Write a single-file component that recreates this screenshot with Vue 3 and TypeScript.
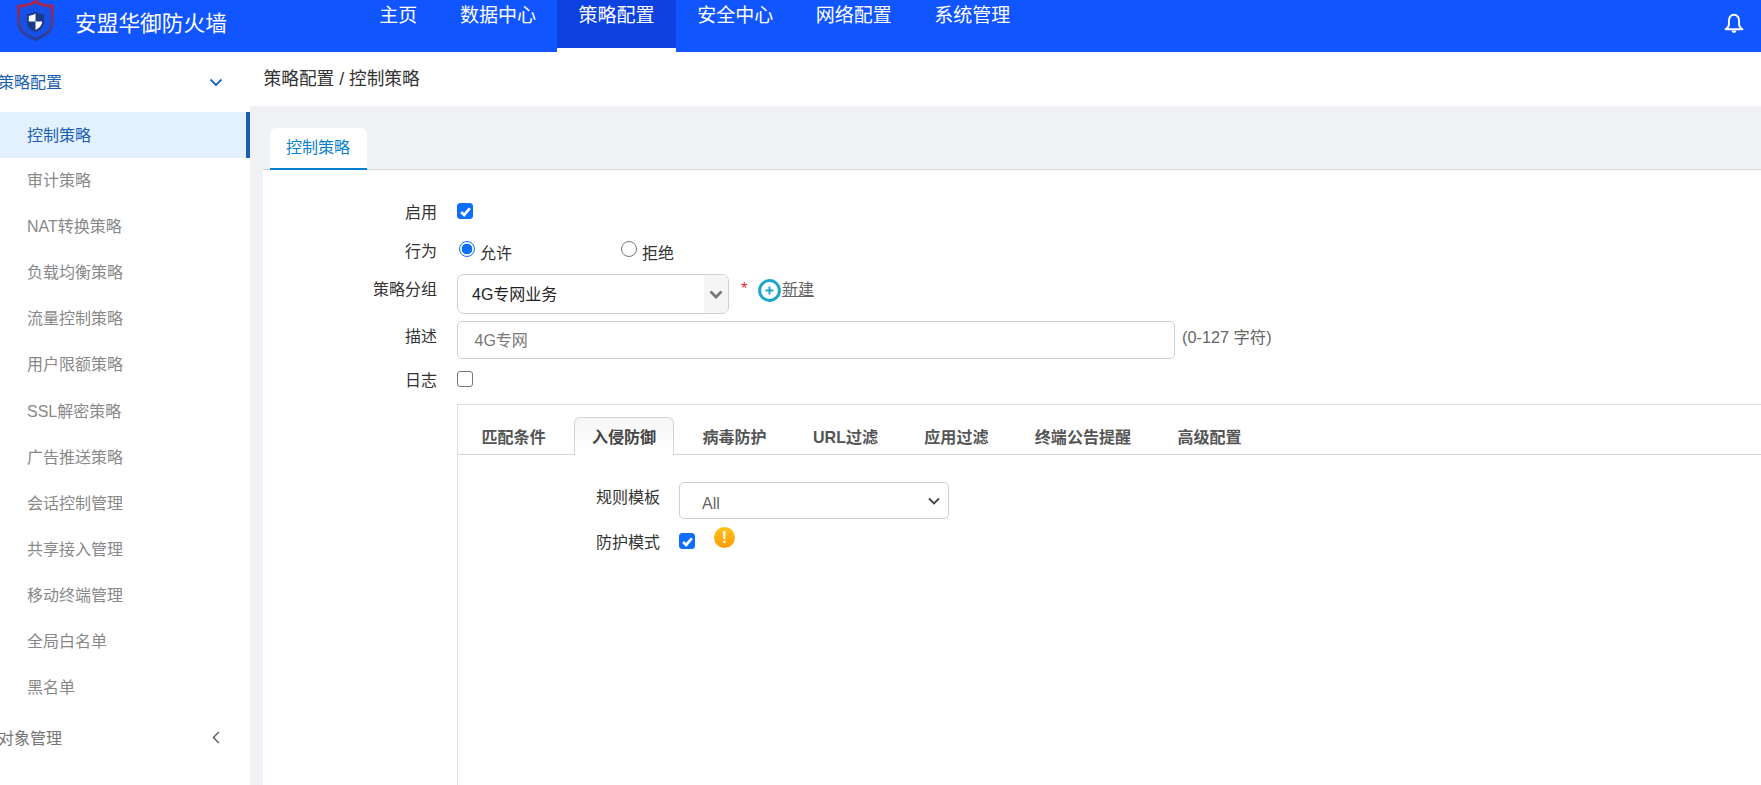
<script setup lang="ts">
const navItems = ['主页', '数据中心', '策略配置', '安全中心', '网络配置', '系统管理']
const sideItems = ['控制策略', '审计策略', 'NAT转换策略', '负载均衡策略', '流量控制策略', '用户限额策略', 'SSL解密策略', '广告推送策略', '会话控制管理', '共享接入管理', '移动终端管理', '全局白名单', '黑名单']
const innerTabs = ['匹配条件', '入侵防御', '病毒防护', 'URL过滤', '应用过滤', '终端公告提醒', '高级配置']
</script>

<template>
  <div class="page">
    <header class="topbar">
      <div class="brand">
        <svg class="logo" width="37" height="41" viewBox="0 0 37 41">
          <defs>
            <linearGradient id="shieldG" x1="0" y1="0" x2="0" y2="1">
              <stop offset="0" stop-color="#b8213f" />
              <stop offset="0.5" stop-color="#5c3a86" />
              <stop offset="1" stop-color="#22409a" />
            </linearGradient>
          </defs>
          <path d="M18.5 1.4C14 4.7 7 6 1.6 6.2V22C1.6 30 9 36 18.5 39.3C28 36 35.4 30 35.4 22V6.2C30 6 23 4.7 18.5 1.4Z" fill="#1650e6" stroke="url(#shieldG)" stroke-width="3" />
          <path d="M18.5 11.5C15.5 13.4 12.6 14.1 10 14.3V22.5C10 27 14 30.4 18.5 32C23 30.4 27 27 27 22.5V14.3C24.4 14.1 21.5 13.4 18.5 11.5Z" fill="#1d3a86" />
          <path d="M18.5 13.6V21.6H11.8V15.9C14.2 15.7 16.3 15 18.5 13.6Z M18.5 21.6H25.2C25 25.6 21.9 28.6 18.5 30Z" fill="#fff" />
        </svg>
        <span class="brand-name">安盟华御防火墙</span>
      </div>
      <nav class="nav">
        <a v-for="n in navItems" :key="n" class="nav-item" :class="{ active: n === '策略配置' }">{{ n }}</a>
      </nav>
      <svg class="bell" width="20" height="21" viewBox="0 0 20 21" fill="none">
        <path d="M10 1.8C6.6 1.8 4.9 4.6 4.9 8V11.5C4.9 13.6 3.4 15 1.6 16.2H18.4C16.6 15 15.1 13.6 15.1 11.5V8C15.1 4.6 13.4 1.8 10 1.8Z" stroke="#fff" stroke-width="1.9" stroke-linejoin="round" />
        <path d="M7.6 17.6H12.4C12.2 19.2 11.3 20 10 20S7.8 19.2 7.6 17.6Z" fill="#fff" />
      </svg>
    </header>

    <div class="body">
      <aside class="sidebar">
        <div class="group open">
          <span class="group-name">策略配置</span>
          <svg width="14" height="9" viewBox="0 0 14 9" fill="none"><path d="M1.5 1.5L7 7L12.5 1.5" stroke="#2767c6" stroke-width="2" /></svg>
        </div>
        <a v-for="s in sideItems" :key="s" class="side-item" :class="{ active: s === '控制策略' }">{{ s }}</a>
        <div class="group closed">
          <span class="group-name">对象管理</span>
          <svg width="8" height="13" viewBox="0 0 8 13" fill="none"><path d="M6.8 1L1.5 6.5L6.8 12" stroke="#666" stroke-width="1.6" /></svg>
        </div>
      </aside>

      <main class="main">
        <div class="crumb">策略配置 / 控制策略</div>
        <div class="work">
          <div class="tabbar"><div class="tab">控制策略</div></div>
          <section class="panel">
            <div class="row r1">
              <label class="lbl">启用</label>
              <span class="check on mt5"><svg width="13" height="13" viewBox="0 0 12 12" fill="none"><path d="M2 6.4L4.8 9.2L10 3" stroke="#fff" stroke-width="2.5" /></svg></span>
            </div>
            <div class="row r2">
              <label class="lbl">行为</label>
              <span class="radio on"></span><span class="opt">允许</span>
              <span class="radio second"></span><span class="opt">拒绝</span>
            </div>
            <div class="row">
              <label class="lbl nudge">策略分组</label>
              <div class="select2">
                <span class="sel-text">4G专网业务</span>
                <span class="sel-arrow"><svg width="14" height="9" viewBox="0 0 14 9" fill="none"><path d="M1.5 1.5L7 7L12.5 1.5" stroke="#777" stroke-width="2.8" /></svg></span>
              </div>
              <span class="star">*</span>
              <svg class="plus" width="23" height="23" viewBox="0 0 23 23" fill="none">
                <circle cx="11.5" cy="11.5" r="9.9" stroke="#1ea6c8" stroke-width="3" />
                <path d="M11.5 7.5V15.5M7.5 11.5H15.5" stroke="#1ea6c8" stroke-width="2" />
              </svg>
              <a class="new">新建</a>
            </div>
            <div class="row">
              <label class="lbl nudge">描述</label>
              <div class="input">4G专网</div>
              <span class="hint">(0-127 字符)</span>
            </div>
            <div class="row">
              <label class="lbl">日志</label>
              <span class="check mt5"></span>
            </div>

            <div class="box">
              <div class="box-tabs">
                <div v-for="t in innerTabs" :key="t" class="box-tab" :class="{ active: t === '入侵防御' }">{{ t }}</div>
              </div>
              <div class="box-form">
                <div class="brow">
                  <label class="blbl nudge">规则模板</label>
                  <div class="native">
                    <span>All</span>
                    <svg width="12" height="8" viewBox="0 0 12 8" fill="none"><path d="M1 1.5L6 6.5L11 1.5" stroke="#444" stroke-width="1.8" /></svg>
                  </div>
                </div>
                <div class="brow b2">
                  <label class="blbl">防护模式</label>
                  <span class="check on mt5"><svg width="13" height="13" viewBox="0 0 12 12" fill="none"><path d="M2 6.4L4.8 9.2L10 3" stroke="#fff" stroke-width="2.5" /></svg></span>
                  <span class="warn">!</span>
                </div>
              </div>
            </div>
          </section>
        </div>
      </main>
    </div>
  </div>
</template>

<style scoped>
.page {
  width: 1761px;
  height: 785px;
  overflow: hidden;
  display: flex;
  flex-direction: column;
  font-family: "Liberation Sans", "Noto Sans CJK SC", sans-serif;
  font-size: 16px;
  color: #333;
  background: #fff;
}
.topbar {
  height: 52px;
  flex: none;
  background: #1155ff;
  display: flex;
  align-items: flex-start;
}
.brand {
  width: 358px;
  flex: none;
  display: flex;
  align-items: center;
  height: 42px;
  padding-left: 17px;
  box-sizing: border-box;
}
.logo { flex: none; margin-top: -1px; }
.brand-name {
  margin-left: 21px;
  font-size: 21.7px;
  color: #fff;
  white-space: nowrap;
}
.nav { display: flex; flex: 1; }
.nav-item {
  height: 48px;
  padding: 1px 21.3px 0;
  box-sizing: border-box;
  line-height: 30px;
  font-size: 19px;
  color: #fff;
  white-space: nowrap;
}
.nav-item.active {
  background: #0e42e0;
  box-shadow: 0 4px 0 #fff;
}
.bell { margin: 13px 17px 0 0; flex: none; }

.body { flex: 1; display: flex; min-height: 0; }
.sidebar {
  width: 250px;
  flex: none;
  display: flex;
  flex-direction: column;
  background: #fff;
}
.group {
  display: flex;
  align-items: center;
  justify-content: space-between;
  flex: none;
  padding-right: 27px;
}
.group-name { margin-left: -2px; font-size: 16px; white-space: nowrap; }
.group.open { height: 60px; color: #1a5fb0; }
.group.open .group-name { margin-top: -2px; }
.group.closed { height: 52.5px; color: #777; padding-right: 30px; }
.side-item {
  height: 46.1px;
  flex: none;
  line-height: 46px;
  padding-left: 27px;
  font-size: 16px;
  color: #888;
  box-sizing: border-box;
}
.side-item.active {
  background: #e3f0fd;
  color: #1a5fb0;
  border-right: 4px solid #1a5fb0;
  line-height: 48px;
}

.main { flex: 1; display: flex; flex-direction: column; min-width: 0; }
.crumb {
  height: 54px;
  flex: none;
  padding-left: 13.5px;
  line-height: 54px;
  font-size: 17.7px;
  color: #333;
}
.work {
  flex: 1;
  background: #eff1f5;
  display: flex;
  flex-direction: column;
  padding-left: 13px;
  min-height: 0;
}
.tabbar {
  height: 64px;
  flex: none;
  display: flex;
  align-items: flex-end;
  padding: 0 0 0 7px;
  border-bottom: 1px solid #d4d4d4;
  box-sizing: border-box;
}
.tab {
  width: 97px;
  height: 42px;
  box-sizing: border-box;
  background: #fff;
  border-radius: 6px 6px 0 0;
  border-bottom: 2px solid #0580cf;
  margin-bottom: -1px;
  color: #0580cf;
  text-align: center;
  padding-right: 1px;
  line-height: 40px;
  font-size: 16px;
}
.panel {
  flex: 1;
  background: #fff;
  padding-top: 28px;
  display: flex;
  flex-direction: column;
  gap: 7px;
  min-height: 0;
}
.row { display: flex; align-items: flex-start; flex: none; }
.r2 { margin-top: 2px; height: 30px; }
.nudge { margin-top: 1px; }
.lbl {
  width: 174px;
  margin-right: 20px;
  flex: none;
  text-align: right;
  line-height: 30px;
  font-size: 16px;
  color: #333;
}
.check {
  width: 16px;
  height: 16px;
  flex: none;
  box-sizing: border-box;
  border: 1.5px solid #767676;
  border-radius: 3px;
  background: #fff;
  display: flex;
  align-items: center;
  justify-content: center;
}
.check svg { flex: none; }
.check.on { background: #0d6efd; border-color: #0d6efd; }
.mt5 { margin-top: 5px; }
.radio {
  width: 16px;
  height: 16px;
  flex: none;
  box-sizing: border-box;
  border-radius: 50%;
  border: 1.5px solid #767676;
  background: #fff;
  margin-top: 4px;
  margin-left: 2px;
}
.radio.on {
  border: 1.5px solid #0d6efd;
  background: radial-gradient(circle, #0d6efd 0 5px, #fff 5.6px);
}
.radio.second { margin-left: 109px; }
.opt { line-height: 30px; margin: 2px 0 0 5px; color: #333; }
.select2 {
  width: 272px;
  height: 40px;
  flex: none;
  box-sizing: border-box;
  border: 1px solid #cfcfcf;
  border-radius: 7px;
  display: flex;
  overflow: hidden;
}
.sel-text { flex: 1; line-height: 39px; padding-left: 14px; color: #222; }
.sel-arrow {
  width: 24px;
  background: #f5f5f5;
  display: flex;
  align-items: center;
  justify-content: center;
}
.star { color: #f0273c; margin: 5px 0 0 12px; line-height: 20px; font-size: 17px; width: 10px; flex: none; }
.plus { margin: 5px 0 0 7px; flex: none; }
.new {
  margin: 1px 0 0 1px;
  line-height: 30px;
  color: #666;
  text-decoration: underline;
}
.input {
  width: 718px;
  height: 38px;
  flex: none;
  box-sizing: border-box;
  border: 1px solid #cfcfcf;
  border-radius: 5px;
  line-height: 38px;
  padding-left: 16.5px;
  color: #777;
}
.hint { margin-left: 7px; line-height: 30px; margin-top: 1px; font-size: 16.3px; color: #666; white-space: nowrap; }

.box {
  margin: 1px -10px 0 194px;
  flex: 1;
  border: 1px solid #ddd;
  border-bottom: 0;
  display: flex;
  flex-direction: column;
  min-height: 0;
}
.box-tabs {
  height: 50px;
  flex: none;
  box-sizing: border-box;
  border-bottom: 1px solid #d4d4d4;
  display: flex;
  align-items: flex-end;
  padding-left: 5.5px;
  gap: 10.3px;
}
.box-tab {
  height: 38px;
  box-sizing: border-box;
  padding: 0 18px;
  margin-bottom: -1px;
  line-height: 40px;
  font-weight: 700;
  font-size: 16.06px;
  color: #555;
  white-space: nowrap;
}
.box-tab.active {
  color: #444;
  padding: 0 17px;
  border: 1px solid #d4d4d4;
  border-bottom: 0;
  border-radius: 6px 6px 0 0;
  background: linear-gradient(#f6f6f6, #fff);
  line-height: 38px;
}
.box-form { padding-top: 27px; display: flex; flex-direction: column; gap: 9px; }
.brow { display: flex; align-items: flex-start; }
.blbl {
  width: 202px;
  margin-right: 19px;
  text-align: right;
  line-height: 30px;
  color: #333;
}
.native {
  width: 270px;
  height: 37px;
  box-sizing: border-box;
  border: 1px solid #cfcfcf;
  border-radius: 5px;
  display: flex;
  align-items: center;
  justify-content: space-between;
  padding: 6px 8px 0 22px;
  color: #666;
}
.native svg { margin-top: -5px; }
.warn {
  width: 21px;
  height: 21px;
  margin: -1px 0 0 19px;
  border-radius: 50%;
  background: linear-gradient(#ffc21a, #ff9a0a);
  color: #fff;
  font-weight: 700;
  font-size: 16px;
  line-height: 21px;
  text-align: center;
}
</style>

<style>
html, body { margin: 0; overflow: hidden; }
</style>
